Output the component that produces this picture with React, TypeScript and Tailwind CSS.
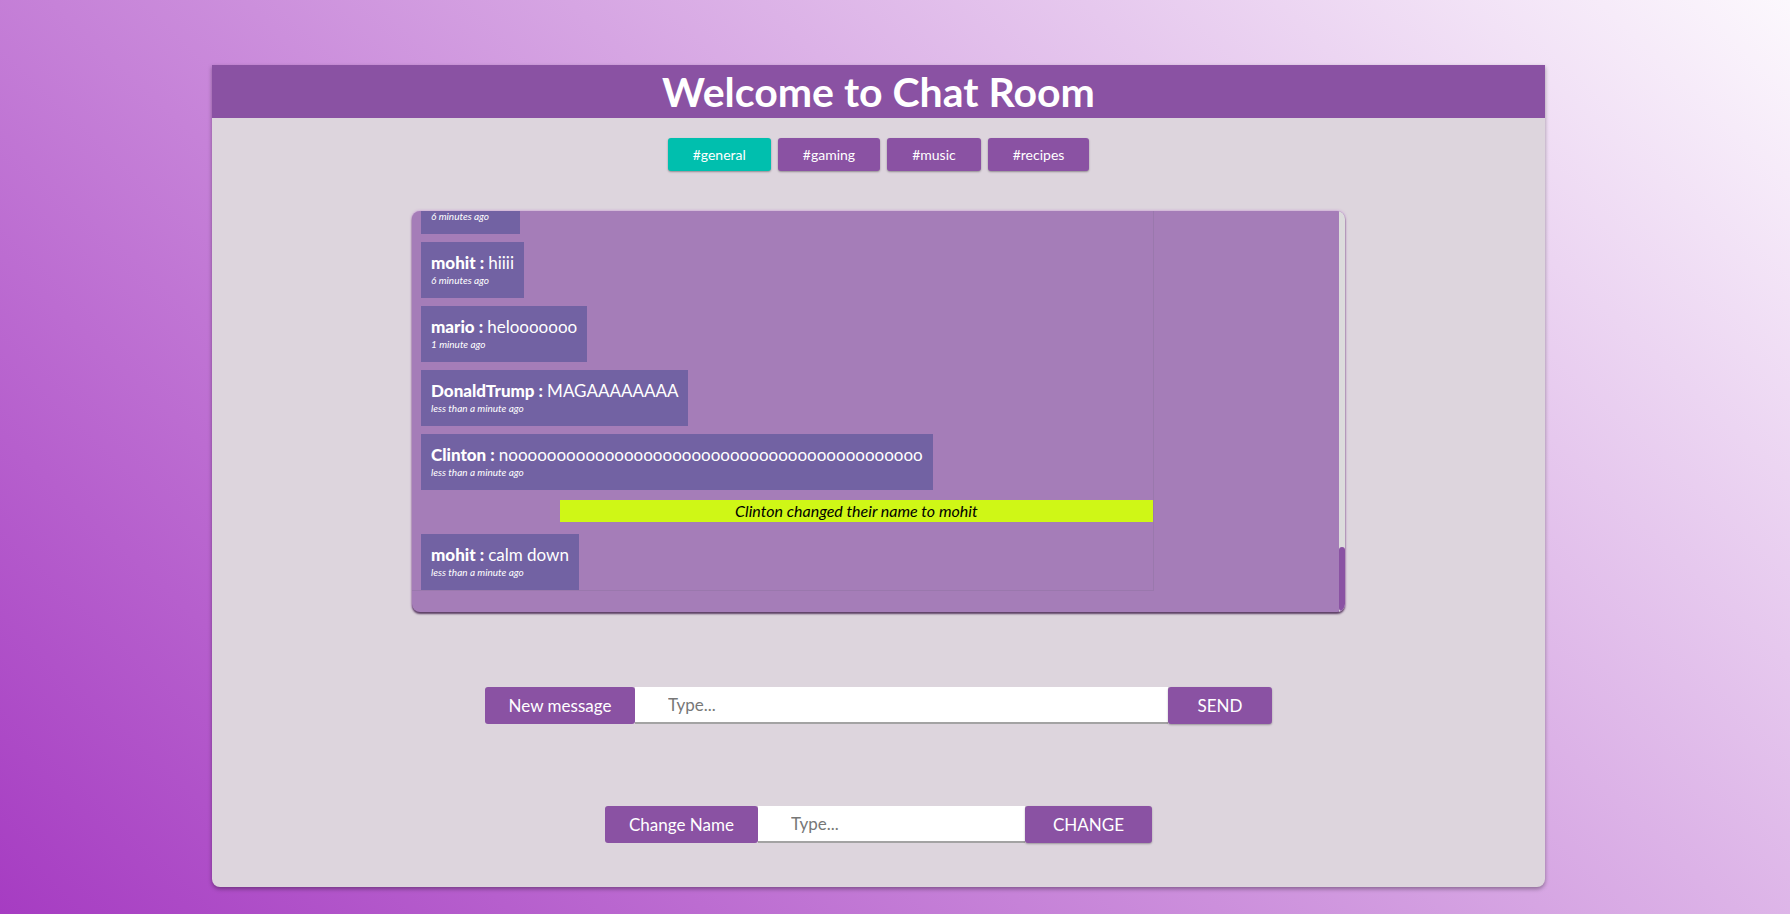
type Msg = { name: string; text: string; time: string };

const messages: Msg[] = [
  { name: "mohit", text: "hiii", time: "6 minutes ago" },
  { name: "mohit", text: "hiiii", time: "6 minutes ago" },
  { name: "mario", text: "helooooooo", time: "1 minute ago" },
  { name: "DonaldTrump", text: "MAGAAAAAAAA", time: "less than a minute ago" },
  {
    name: "Clinton",
    text: "n" + "o".repeat(43),
    time: "less than a minute ago",
  },
];

const channels = ["#general", "#gaming", "#music", "#recipes"];

function Bubble({ m }: { m: Msg }) {
  return (
    <div className="ml-[9px] w-fit shrink-0 bg-[#7262a3] px-[10px] pt-[11px] pb-[11px] text-white">
      <p className="text-[17px] leading-[20px] whitespace-nowrap">
        <span className="font-black">{m.name} : </span>
        <span>{m.text}</span>
      </p>
      <p className="text-[10px] leading-[14px] italic">{m.time}</p>
    </div>
  );
}

export default function App() {
  return (
    <div className="min-h-screen w-full bg-[linear-gradient(43deg,#a63cc2,#fcf8fd)] pt-[65px] pb-[27px] font-['Lato',sans-serif]">
      <div className="ml-[212px] w-[1333px] rounded-b-lg bg-[#ddd5dd] pb-[44px] shadow-[0_2px_4px_rgba(0,0,0,0.35)]">
        {/* header */}
        <div className="flex h-[53px] items-center justify-center bg-[#8a52a3]">
          <h1 className="text-[41px] font-bold leading-none text-white">Welcome to Chat Room</h1>
        </div>

        {/* channels */}
        <div className="mt-[20px] flex justify-center gap-[7px]">
          {channels.map((c, i) => (
            <button
              key={c}
              className={`h-[33px] rounded-[3px] px-[25px] text-[14px] text-white shadow-[0_1px_2px_rgba(0,0,0,0.35)] ${
                i === 0 ? "bg-[#00bfae]" : "bg-[#8a52a3]"
              }`}
            >
              {c}
            </button>
          ))}
        </div>

        {/* messages */}
        <div className="mx-auto mt-[40px] flex h-[401px] w-[933px] overflow-hidden rounded-lg bg-[#a57db8] shadow-[0_2px_2px_rgba(40,10,50,0.7),0_0_3px_rgba(190,120,210,0.8)]">
          <div className="flex min-w-0 flex-1 flex-col justify-end overflow-hidden pb-[21px]">
            <div className="flex w-4/5 shrink-0 flex-col gap-2 border-r border-b border-[#9a78ad]">
              {messages.map((m, i) => (
                <Bubble key={i} m={m} />
              ))}
              <div className="mt-[2px] mb-[4px] ml-[20%] bg-[#cff716] text-center text-[16px] leading-[22px] text-black italic">
                Clinton changed their name to mohit
              </div>
              <Bubble m={{ name: "mohit", text: "calm down", time: "less than a minute ago" }} />
            </div>
          </div>
          {/* scrollbar */}
          <div className="flex w-[6px] flex-col bg-[#dcdcdc]">
            <div className="flex-1" />
            <div className="mb-[1px] h-[64px] rounded-full bg-[#8a52a3]" />
          </div>
        </div>

        {/* send message */}
        <div className="mt-[75px] flex justify-center">
          <div className="flex h-[37px] w-[150px] items-center justify-center rounded-[3px] bg-[#8a52a3] text-[17px] text-white">
            New message
          </div>
          <input
            placeholder="Type..."
            className="h-[37px] w-[533px] border-b-2 border-[#a3a3a3] bg-white pl-[33px] text-[17px] outline-none placeholder:text-[#777]"
          />
          <button className="h-[37px] w-[104px] rounded-[3px] bg-[#8a52a3] text-[17px] text-white shadow-[0_1px_2px_rgba(0,0,0,0.3)]">
            SEND
          </button>
        </div>

        {/* change name */}
        <div className="mt-[82px] flex justify-center">
          <div className="flex h-[37px] w-[153px] items-center justify-center rounded-[3px] bg-[#8a52a3] text-[17px] text-white">
            Change Name
          </div>
          <input
            placeholder="Type..."
            className="h-[37px] w-[267px] border-b-2 border-[#a3a3a3] bg-white pl-[33px] text-[17px] outline-none placeholder:text-[#777]"
          />
          <button className="h-[37px] w-[127px] rounded-[3px] bg-[#8a52a3] text-[17px] text-white shadow-[0_1px_2px_rgba(0,0,0,0.3)]">
            CHANGE
          </button>
        </div>
      </div>
    </div>
  );
}
